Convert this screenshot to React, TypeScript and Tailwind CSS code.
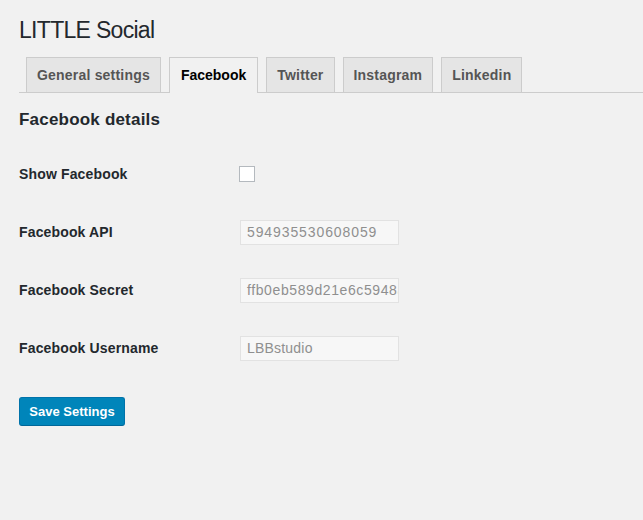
import React from "react";

const tabs = ["General settings", "Facebook", "Twitter", "Instagram", "Linkedin"];

const rows: { label: string; value?: string; checkbox?: boolean; track?: string }[] = [
  { label: "Show Facebook", checkbox: true },
  { label: "Facebook API", value: "594935530608059", track: "tracking-[0.9px]" },
  { label: "Facebook Secret", value: "ffb0eb589d21e6c5948a3e", track: "tracking-[0.6px]" },
  { label: "Facebook Username", value: "LBBstudio", track: "tracking-[0.2px]" },
];

export default function App() {
  return (
    <div className="min-h-[520px] bg-[#f1f1f1] pl-[19px] text-[#23282d] font-['Liberation_Sans',Arial,sans-serif]">
      <h1 className="pt-[16px] text-[23px] leading-[29px] font-normal tracking-[-0.7px]">LITTLE Social</h1>
      <div className="mt-[12px] flex items-end gap-[8px] border-b border-[#cccccc] pl-[7px]">
        {tabs.map((t) =>
          t === "Facebook" ? (
            <div
              key={t}
              className="-mb-px h-[36px] border border-b-0 border-[#cccccc] bg-[#f1f1f1] px-[11px] pt-[5px] text-[14px] font-bold leading-[24px] text-black"
            >
              {t}
            </div>
          ) : (
            <div
              key={t}
              className="h-[35px] border border-b-0 border-[#cccccc] bg-[#e5e5e5] px-[10px] pt-[5px] text-[14px] font-bold leading-[24px] tracking-[0.2px] text-[#555555]"
            >
              {t}
            </div>
          )
        )}
      </div>
      <h2 className="mt-[15px] text-[17px] font-bold leading-[24px] tracking-[0.2px]">Facebook details</h2>
      <div className="mt-[13px] flex flex-col">
        {rows.map((r) => (
          <div key={r.label} className="flex h-[58px] items-center">
            <div className="w-[220px] text-[14px] font-bold tracking-[0.15px]">{r.label}</div>
            {r.checkbox ? (
              <div className="h-[16px] w-[16px] border border-[#b4b9be] bg-white" />
            ) : (
              <div
                className={`ml-px h-[25px] w-[159px] overflow-hidden whitespace-nowrap border border-[#e2e2e2] bg-[#f7f7f7] pl-[6px] text-[14px] leading-[23px] text-[#8f8f8f] ${r.track}`}
              >
                {r.value}
              </div>
            )}
          </div>
        ))}
      </div>
      <button className="mt-[20px] h-[29px] w-[106px] rounded-[3px] border border-[#0073aa] border-b-[#006799] bg-[#0085ba] text-[13px] font-bold text-white">
        Save Settings
      </button>
    </div>
  );
}
